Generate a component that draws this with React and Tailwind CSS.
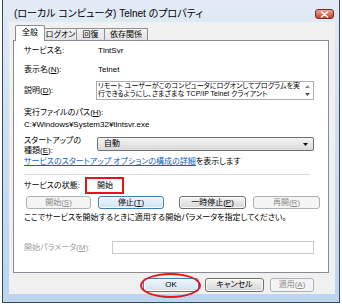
import React from "react";

function Btn({ children, w, kind = "normal" }) {
  const base = "flex items-center justify-center h-full rounded-[3px] border text-[8px] leading-none";
  const kinds = {
    normal: "border-[#707070] bg-linear-to-b from-[#f4f4f4] to-[#d6d6d6] shadow-[inset_0_0_0_1px_#fbfbfb] text-black",
    focus: "border-[#3c7fb1] bg-linear-to-b from-[#eef6fc] to-[#cfe3f3] shadow-[inset_0_0_0_1px_#f7fbff] text-black",
    disabled: "border-[#adb2b5] bg-[#f4f4f4] text-[#8a8a8a]",
  };
  return (
    <div className={base + " " + kinds[kind]} style={{ width: w }}>
      {children}
    </div>
  );
}

function Tab({ label, active, w }) {
  if (active) {
    return (
      <div
        className="flex h-[16px] items-start justify-center rounded-t-[2px] border border-b-0 border-[#898c95] bg-white pt-[2px] text-[8px] leading-[10px]"
        style={{ width: w }}
      >
        {label}
      </div>
    );
  }
  return (
    <div
      className="-ml-px mb-px flex h-[12px] items-center justify-center border border-b-0 border-[#8e9199] bg-linear-to-b from-[#f3f3f3] to-[#e2e2e2] text-[8px] leading-none"
      style={{ width: w }}
    >
      {label}
    </div>
  );
}

export default function App() {
  return (
    <div className="h-[304px] w-[342px] overflow-hidden bg-white pl-[2px] text-black [font-family:'Liberation_Sans','Noto_Sans_CJK_JP',sans-serif] [font-feature-settings:'palt']">
      <div className="flex h-[303px] w-[338px] flex-col border-x border-b border-[#34495c] bg-linear-to-b from-[#e2ebf5] via-[#cbddf0] to-[#bcd4ee]">
        {/* title bar */}
        <div className="flex h-[22px] shrink-0 items-start justify-between pl-[11px] pr-[5px]">
          <div className="pt-[7px] text-[10px] leading-[14px] text-black">
            (ローカル コンピュータ) Telnet のプロパティ
          </div>
          <div className="mt-[9px] flex h-[10px] w-[19px] items-center justify-center rounded-[3px] border border-[#7b2a22] bg-linear-to-b from-[#e7a597] to-[#c5402b]">
            <svg width="9" height="7" viewBox="0 0 9 7">
              <path d="M1.5 1 L7.5 6 M7.5 1 L1.5 6" stroke="#fff" strokeWidth="1.6" strokeLinecap="round" />
            </svg>
          </div>
        </div>

        {/* client */}
        <div className="mb-[8px] ml-[6px] mr-[4px] flex flex-1 flex-col bg-[#f0f0f0]">
          <div className="relative z-10 -mb-px flex items-end pl-[6px] pt-[3px]">
            <Tab label="全般" active w={30} />
            <Tab label="ログオン" w={33} />
            <Tab label="回復" w={29} />
            <Tab label="依存関係" w={44} />
          </div>

          <div className="ml-[4px] flex h-[233px] w-[316px] flex-col border border-[#898c95] bg-white pl-[10px] text-[8px]">
            <div className="mt-[3px] flex h-[14px] items-center">
              <div className="w-[74px]">サービス名:</div>
              <div>TlntSvr</div>
            </div>
            <div className="mt-[5px] flex h-[14px] items-center">
              <div className="w-[74px]">
                表示名(<u>N</u>):
              </div>
              <div>Telnet</div>
            </div>
            <div className="mt-[4px] flex h-[19px] items-center">
              <div className="w-[72px]">
                説明(<u>D</u>):
              </div>
              <div className="flex h-[19px] w-[218px] border border-[#abadb3] bg-white">
                <div className="flex-1 overflow-hidden whitespace-nowrap pl-[1px] text-[7px] leading-[8px]">
                  <div>リモート ユーザーがこのコンピュータにログオンしてプログラムを実</div>
                  <div>行できるようにし、さまざまな TCP/IP Telnet クライアント</div>
                </div>
                <div className="flex w-[11px] flex-col items-center justify-between py-[3px]">
                  <svg width="5" height="3" viewBox="0 0 5 3">
                    <path d="M0 3 L2.5 0 L5 3 Z" fill="#8c8c8c" />
                  </svg>
                  <svg width="5" height="3" viewBox="0 0 5 3">
                    <path d="M0 0 L2.5 3 L5 0 Z" fill="#4d4d4d" />
                  </svg>
                </div>
              </div>
            </div>
            <div className="mt-[7px] flex h-[12px] items-center">
              実行ファイルのパス(<u>H</u>):
            </div>
            <div className="flex h-[12px] items-center">C:¥Windows¥System32¥tlntsvr.exe</div>
            <div className="mt-[4px] flex h-[21px]">
              <div className="w-[73px] pt-[1px] leading-[10px]">
                スタートアップの
                <br />
                種類(<u>E</u>):
              </div>
              <div className="mt-[2px] flex h-[14px] w-[217px] items-center justify-between rounded-[2px] border border-[#707070] bg-linear-to-b from-[#f3f3f3] to-[#dadada] pl-[6px] pr-[5px]">
                <span>自動</span>
                <svg width="5" height="3" viewBox="0 0 5 3">
                  <path d="M0 0 L2.5 3 L5 0 Z" fill="#000" />
                </svg>
              </div>
            </div>
            <div className="flex h-[12px] items-center">
              <span className="text-[#0a64c8] underline">サービスのスタートアップ オプションの構成の詳細</span>
              <span>を表示します</span>
            </div>
            <div className="mt-[6px] h-px w-[286px] bg-[#d5dbe2]" />
            <div className="mt-[2px] flex h-[17px] items-center">
              <div className="w-[61px]">サービスの状態:</div>
              <div className="flex h-[17px] w-[39px] items-center border-2 border-[#e3141b] pl-[10px]">開始</div>
            </div>
            <div className="ml-[2px] mt-[2px] flex h-[13px] gap-[7px]">
              <Btn w={65} kind="disabled">
                開始(<u>S</u>)
              </Btn>
              <Btn w={66} kind="focus">
                停止(<u>T</u>)
              </Btn>
              <div className="w-px" />
              <Btn w={67}>
                一時停止(<u>P</u>)
              </Btn>
              <Btn w={67} kind="disabled">
                再開(<u>R</u>)
              </Btn>
            </div>
            <div className="mt-[3px] flex h-[12px] items-center">
              ここでサービスを開始するときに適用する開始パラメータを指定してください。
            </div>
            <div className="mt-[17px] flex h-[13px] items-center">
              <div className="w-[88px] text-[#a0a0a0]">
                開始パラメータ(<u>M</u>):
              </div>
              <div className="h-[13px] w-[202px] border border-[#c7c9cc] bg-white" />
            </div>
          </div>

          <div className="mt-[5px] flex h-[14px] justify-end gap-[6px] pr-[21px]">
            <div className="relative">
              <Btn w={56} kind="focus">
                OK
              </Btn>
              <div className="absolute -bottom-[6px] -left-[3px] -right-[2px] -top-[5px] rounded-[50%] border-2 border-[#e3141b]" />
            </div>
            <Btn w={59}>キャンセル</Btn>
            <Btn w={44} kind="disabled">
              適用(<u>A</u>)
            </Btn>
          </div>
        </div>
      </div>
    </div>
  );
}
